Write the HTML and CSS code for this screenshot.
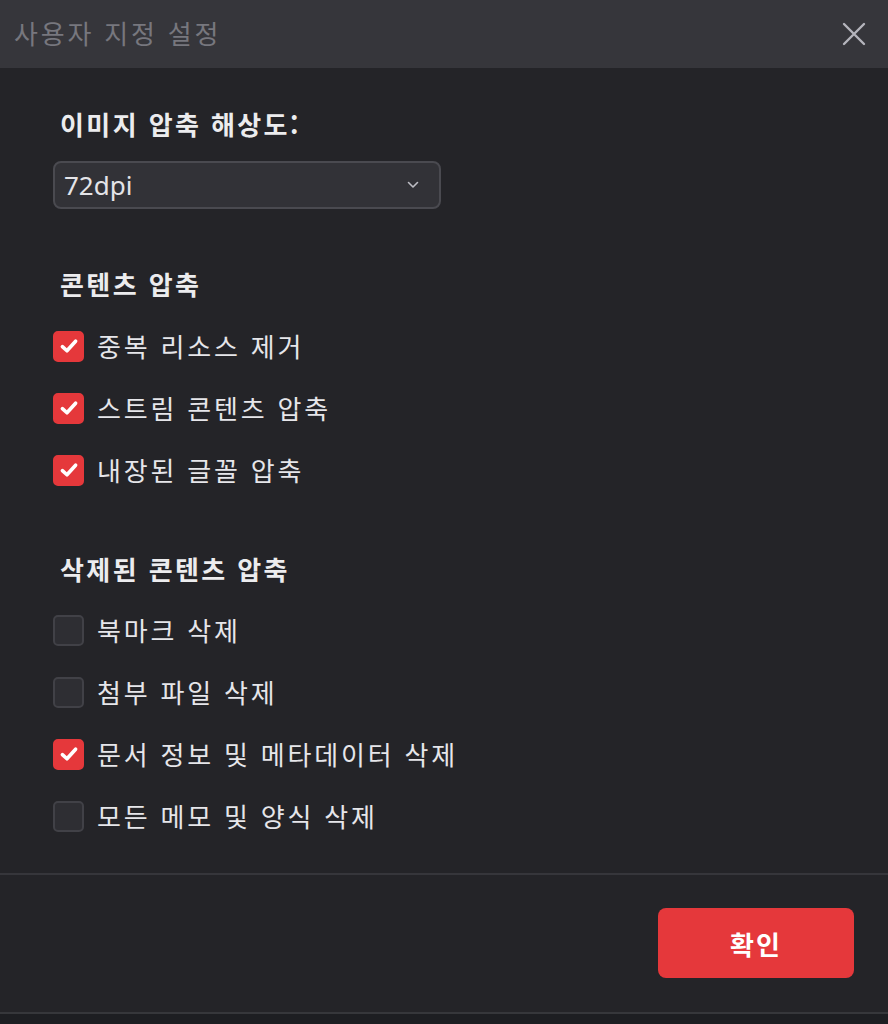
FILE: index.html
```html
<!DOCTYPE html>
<html lang="ko">
<head>
<meta charset="utf-8">
<link rel="stylesheet" href="styles.css">
</head>
<body>
<div class="dialog">
  <div class="header">
    <span class="title">사용자 지정 설정</span>
    <svg class="close" width="24" height="24" viewBox="0 0 24 24"><path d="M2 2L22 22M22 2L2 22" stroke="#b4b4bc" stroke-width="2.4" stroke-linecap="round"/></svg>
  </div>
  <div class="content">
    <div class="heading">이미지 압축 해상도:</div>
    <div class="select">
      <span class="select-value">72dpi</span>
      <svg class="chev" width="12" height="8" viewBox="0 0 12 8"><path d="M1.5 1.5L6 6L10.5 1.5" fill="none" stroke="#bdbdc4" stroke-width="1.6" stroke-linecap="round" stroke-linejoin="round"/></svg>
    </div>

    <div class="heading h2">콘텐츠 압축</div>
    <div class="rows">
      <div class="row"><span class="box on"><svg viewBox="0 0 20 20"><path d="M4.5 10.5L8.3 14L15.5 6" fill="none" stroke="#fff" stroke-width="3" stroke-linecap="round" stroke-linejoin="round"/></svg></span><span class="label">중복 리소스 제거</span></div>
      <div class="row"><span class="box on"><svg viewBox="0 0 20 20"><path d="M4.5 10.5L8.3 14L15.5 6" fill="none" stroke="#fff" stroke-width="3" stroke-linecap="round" stroke-linejoin="round"/></svg></span><span class="label">스트림 콘텐츠 압축</span></div>
      <div class="row"><span class="box on"><svg viewBox="0 0 20 20"><path d="M4.5 10.5L8.3 14L15.5 6" fill="none" stroke="#fff" stroke-width="3" stroke-linecap="round" stroke-linejoin="round"/></svg></span><span class="label">내장된 글꼴 압축</span></div>
    </div>

    <div class="heading h3">삭제된 콘텐츠 압축</div>
    <div class="rows r2">
      <div class="row"><span class="box"></span><span class="label">북마크 삭제</span></div>
      <div class="row"><span class="box"></span><span class="label">첨부 파일 삭제</span></div>
      <div class="row"><span class="box on"><svg viewBox="0 0 20 20"><path d="M4.5 10.5L8.3 14L15.5 6" fill="none" stroke="#fff" stroke-width="3" stroke-linecap="round" stroke-linejoin="round"/></svg></span><span class="label">문서 정보 및 메타데이터 삭제</span></div>
      <div class="row"><span class="box"></span><span class="label">모든 메모 및 양식 삭제</span></div>
    </div>
  </div>
  <div class="footer">
    <button class="ok">확인</button>
  </div>
</div>
</body>
</html>
```
FILE: styles.css
```css
html, body {
  margin: 0;
  padding: 0;
  background: #1d1e22;
}
body {
  font-family: "Noto Sans CJK KR", "Noto Sans", sans-serif;
  width: 888px;
  height: 1024px;
  overflow: hidden;
}
.dialog {
  width: 888px;
  height: 1014px;
  background: #242428;
  border-bottom: 2px solid #36373b;
  box-sizing: border-box;
  display: flex;
  flex-direction: column;
}
.header {
  height: 68px;
  background: #36363b;
  display: flex;
  align-items: center;
  justify-content: space-between;
  padding: 0 22px 0 14px;
  flex-shrink: 0;
}
.title {
  color: #77777e;
  font-size: 26px;
  letter-spacing: 2.8px;
  line-height: 1;
  margin-top: -2px;
}
.close {
  display: block;
}
.content {
  padding: 40px 0 0 53px;
  flex: 1;
}
.heading {
  color: #ececee;
  font-size: 26px;
  font-weight: 700;
  line-height: 32px;
  height: 32px;
  padding-left: 7px;
  letter-spacing: 2.4px;
}
.select {
  margin-top: 21px;
  width: 388px;
  height: 48px;
  box-sizing: border-box;
  border: 2px solid #4a4a50;
  border-radius: 8px;
  background: #323237;
  display: flex;
  align-items: center;
  justify-content: space-between;
  padding: 0 20px 0 9px;
}
.select-value {
  color: #e4e4e8;
  font-family: "Noto Sans", sans-serif;
  font-size: 26px;
  line-height: 1;
}
.chev { display: block; }
.h2 { margin-top: 59px; }
.h3 { margin-top: 52px; }
.rows { margin-top: 15px; }
.rows.r2 { margin-top: 14px; }
.row {
  height: 62px;
  display: flex;
  align-items: center;
}
.box {
  width: 31px;
  height: 31px;
  box-sizing: border-box;
  border-radius: 5px;
  background: #2e2e33;
  border: 2px solid #414147;
  margin-right: 13px;
  flex-shrink: 0;
  display: flex;
  align-items: center;
  justify-content: center;
}
.box.on {
  background: #e5383b;
  border-color: #e5383b;
}
.box svg {
  width: 24px;
  height: 24px;
  display: block;
}
.label {
  color: #e6e6ea;
  font-size: 26px;
  letter-spacing: 2.8px;
  line-height: 1;
}
.footer {
  border-top: 2px solid #36363b;
  padding: 33px 34px 0 0;
  height: 139px;
  box-sizing: border-box;
  display: flex;
  justify-content: flex-end;
  align-items: flex-start;
}
.ok {
  width: 196px;
  height: 70px;
  background: #e5383b;
  border: none;
  border-radius: 8px;
  color: #ffffff;
  font-family: "Noto Sans CJK KR", sans-serif;
  font-size: 26px;
  font-weight: 700;
  letter-spacing: 2px;
}
```
